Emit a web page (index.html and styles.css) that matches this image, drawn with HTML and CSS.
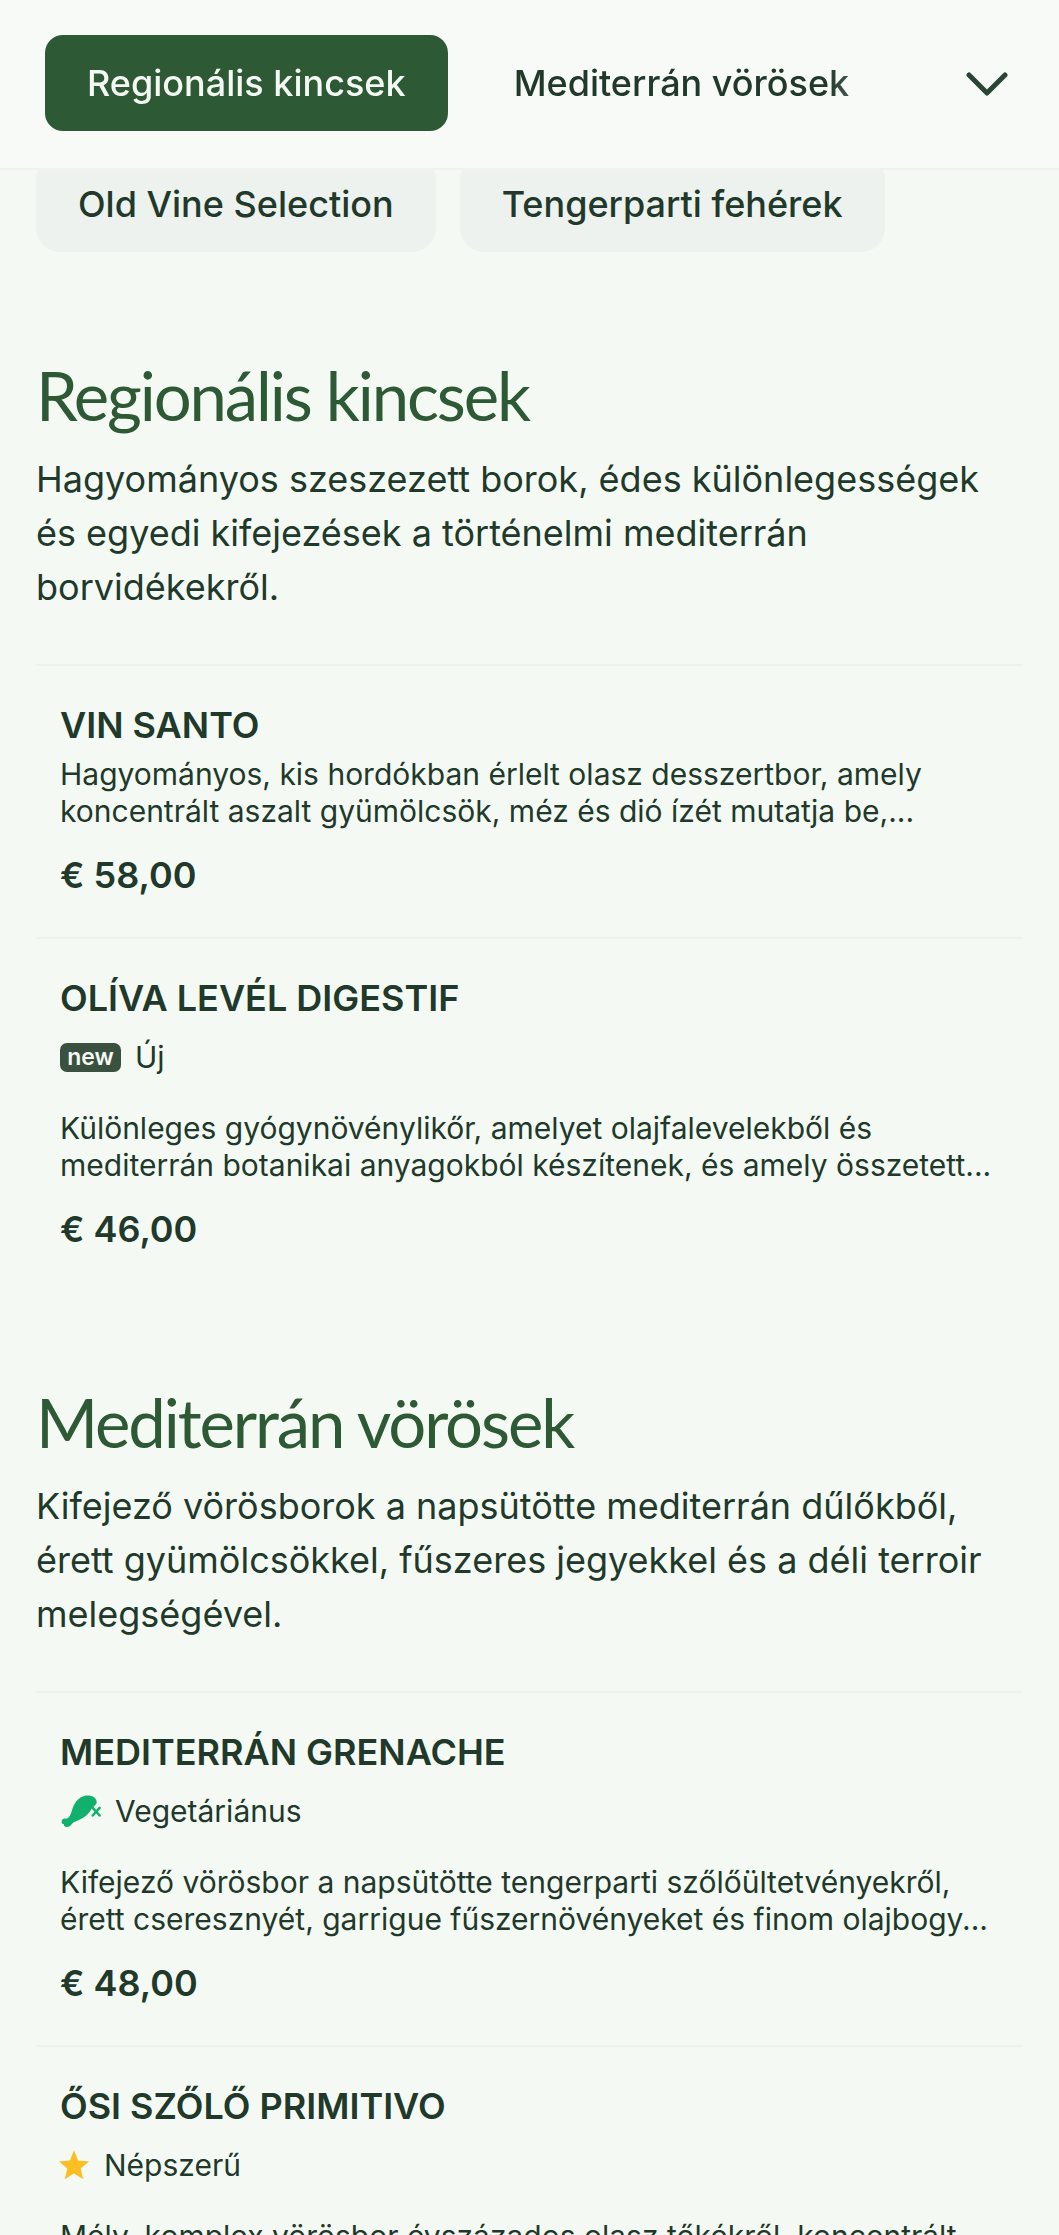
FILE: index.html
```html
<!DOCTYPE html>
<html lang="hu">
<head>
<meta charset="utf-8">
<title>Borlap</title>
<link rel="stylesheet" href="styles.css">
</head>
<body>
<header class="topbar">
  <nav class="tabs">
    <a class="tab tab-active">Regionális kincsek</a>
    <a class="tab">Mediterrán vörösek</a>
  </nav>
  <button class="more" aria-label="Több">
    <svg viewBox="0 0 42 26" width="42" height="26"><path d="M3 4 L21 22 L39 4" fill="none" stroke="#2b4535" stroke-width="5" stroke-linecap="round" stroke-linejoin="round"/></svg>
  </button>
</header>
<main class="page">
  <div class="pills">
    <a class="pill">Old Vine Selection</a>
    <a class="pill">Tengerparti fehérek</a>
  </div>

  <section class="section">
    <h2 class="section-title">Regionális kincsek</h2>
    <p class="section-desc">Hagyományos szeszezett borok, édes különlegességek és egyedi kifejezések a történelmi mediterrán borvidékekről.</p>
    <article class="item">
      <h3 class="item-name">VIN SANTO</h3>
      <p class="item-desc">Hagyományos, kis hordókban érlelt olasz desszertbor, amely koncentrált aszalt gyümölcsök, méz és dió ízét mutatja be,...</p>
      <div class="item-price">€ 58,00</div>
    </article>
    <article class="item">
      <h3 class="item-name">OLÍVA LEVÉL DIGESTIF</h3>
      <div class="tag"><span class="badge-new">new</span><span>Új</span></div>
      <p class="item-desc item-desc-tagged">Különleges gyógynövénylikőr, amelyet olajfalevelekből és mediterrán botanikai anyagokból készítenek, és amely összetett...</p>
      <div class="item-price">€ 46,00</div>
    </article>
  </section>

  <section class="section section-next">
    <h2 class="section-title">Mediterrán vörösek</h2>
    <p class="section-desc">Kifejező vörösborok a napsütötte mediterrán dűlőkből, érett gyümölcsökkel, fűszeres jegyekkel és a déli terroir melegségével.</p>
    <article class="item">
      <h3 class="item-name">MEDITERRÁN GRENACHE</h3>
      <div class="tag">
        <svg class="icon-veg" viewBox="28 20 124 106" width="41" height="35"><path fill="#12b06d" d="M33 103C33 96 40 93 47 95C56 92 60 84 64 70C70 48 84 28 104 25C122 22 140 30 139 46C138 54 128 58 122 68C112 86 92 98 68 106C63 113 54 122 46 120C40 118 38 114 40 111C34 111 33 108 33 103Z"/><path d="M127 62L148 85M148 62L127 85" fill="none" stroke="#12b06d" stroke-width="7.500" stroke-linecap="round"/></svg>
        <span>Vegetáriánus</span>
      </div>
      <p class="item-desc item-desc-tagged">Kifejező vörösbor a napsütötte tengerparti szőlőültetvényekről, érett cseresznyét, garrigue fűszernövényeket és finom olajbogy...</p>
      <div class="item-price">€ 48,00</div>
    </article>
    <article class="item">
      <h3 class="item-name">ŐSI SZŐLŐ PRIMITIVO</h3>
      <div class="tag">
        <svg class="icon-star" viewBox="0 0 24 24" width="32" height="32"><path fill="#fbbf24" d="M12 1l3.100 7.700 8.200.6-6.300 5.300 2 8L12 18.300 5 22.600l2-8L.7 9.300l8.200-.6z"/></svg>
        <span>Népszerű</span>
      </div>
      <p class="item-desc item-desc-tagged">Mély, komplex vörösbor évszázados olasz tőkékről, koncentrált</p>
    </article>
  </section>
</main>
</body>
</html>
```
FILE: styles.css
```css
* { box-sizing: border-box; }
html, body { margin: 0; height: 100%; }
body {
  position: relative;
  overflow: hidden;
  background: #f4f9f4;
  color: #21392a;
  font-family: Inter, "Liberation Sans", sans-serif;
}
.topbar {
  position: absolute;
  top: 0; left: 0; right: 0;
  height: 170px;
  display: flex;
  align-items: center;
  padding: 0 51px 0 45px;
  background: #f7faf7;
  border-bottom: 2px solid #eef3ee;
}
.tabs {
  flex: 1;
  display: flex;
  gap: 24px;
  overflow: hidden;
  padding-bottom: 2px;
  -webkit-mask-image: linear-gradient(to right, #000 85%, transparent 100%);
  mask-image: linear-gradient(to right, #000 85%, transparent 100%);
}
.tab {
  flex: none;
  height: 96px;
  padding: 0 42px;
  display: flex;
  align-items: center;
  border-radius: 18px;
  font-size: 36px;
  font-weight: 500;
}
.tab-active { background: #2d5a35; color: #f4f9f4; }
.more {
  flex: none;
  padding: 0;
  border: 0;
  background: none;
  display: flex;
}
.page { padding: 156px 36px 0; }
.pills { display: flex; gap: 24px; }
.pill {
  height: 96px;
  padding: 0 42px;
  display: flex;
  align-items: center;
  border-radius: 24px;
  background: #edf2ee;
  font-size: 36px;
  font-weight: 500;
}
.section { margin-top: 101px; }
.section-next { margin-top: 89px; }
.section-title {
  margin: 0;
  font-family: Lato, "Liberation Sans", sans-serif;
  font-weight: 400;
  font-size: 67px;
  line-height: 84px;
  letter-spacing: -2.100px;
  color: #2d5a35;
}
.section-desc {
  margin: 15px 0 0;
  padding-right: 8px;
  font-size: 36px;
  line-height: 54px;
}
.item {
  margin-top: 50px;
  padding: 37px 24px 40px;
  border-top: 2px solid #edf2ee;
}
.item + .item { margin-top: 0; }
.item-name {
  margin: 0;
  font-size: 36px;
  line-height: 44px;
  font-weight: 600;
}
.item-desc {
  margin: 9px 0 0;
  font-size: 30px;
  line-height: 37px;
}
.item-desc-tagged { margin-top: 31px; }
.item-price {
  margin-top: 23px;
  font-size: 36px;
  line-height: 44px;
  font-weight: 600;
}
.tag {
  margin-top: 15px;
  display: flex;
  align-items: center;
  gap: 14px;
  height: 44px;
  font-size: 30px;
}
.badge-new {
  display: flex;
  align-items: center;
  justify-content: center;
  width: 61px;
  height: 29px;
  border-radius: 7px;
  background: #3a5140;
  color: #f4f9f4;
  font-size: 23px;
  font-weight: 600;
}
.icon-star { margin-left: -2px; }
```
